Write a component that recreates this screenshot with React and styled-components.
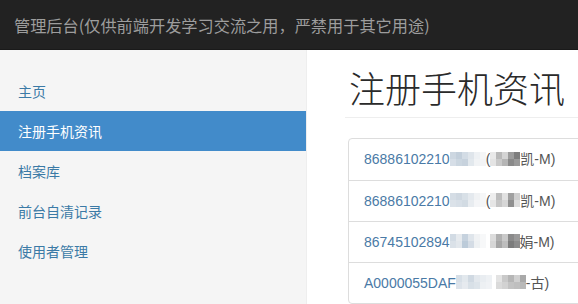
import React from "react";
import styled, { createGlobalStyle } from "styled-components";

const GlobalStyle = createGlobalStyle`
  html, body {
    margin: 0;
    padding: 0;
    overflow: hidden;
    background: #fff;
  }
  body {
    font-family: "Liberation Sans", "Noto Sans CJK SC", sans-serif;
    font-size: 14px;
    color: #333;
  }
  * { box-sizing: border-box; }
`;

const Page = styled.div`
  width: 578px;
  height: 304px;
  display: flex;
  flex-direction: column;
  overflow: hidden;
`;

const Navbar = styled.header`
  height: 50px;
  flex: none;
  background: #222;
  border-bottom: 1px solid #1a1a1a;
  display: flex;
  align-items: center;
  padding: 0 14px;
`;

const Brand = styled.span`
  font-family: "Noto Sans CJK SC", sans-serif;
  font-size: 16.2px;
  color: #9d9d9d;
  line-height: 20px;
`;

const Body = styled.div`
  flex: 1;
  display: flex;
  min-height: 0;
`;

const Sidebar = styled.nav`
  width: 307px;
  flex: none;
  background: #f5f5f5;
  border-right: 1px solid #eee;
  padding-top: 21px;
  display: flex;
  flex-direction: column;
`;

const NavItem = styled.a`
  display: block;
  padding: 10px 18px;
  line-height: 20px;
  font-family: "Noto Sans CJK SC", sans-serif;
  font-size: 14px;
  color: ${(p) => (p.$active ? "#fff" : "#3b7aa6")};
  background: ${(p) => (p.$active ? "#428bca" : "transparent")};
  text-decoration: none;
`;

const Main = styled.main`
  flex: 1;
  min-width: 0;
  padding: 18px 0 0 38px;
  overflow: hidden;
`;

const PageHeader = styled.h1`
  margin: 0 0 20px;
  padding: 0 0 9px 4px;
  border-bottom: 1px solid #eee;
  font-family: "Noto Sans CJK SC", sans-serif;
  font-size: 36px;
  font-weight: 300;
  line-height: 1.1;
  color: #2a2a2a;
  white-space: nowrap;
`;

const ListGroup = styled.div`
  margin: 0 -6px 0 3px;
  border: 1px solid #ddd;
  border-radius: 4px;
  background: #fff;
`;

const ListItem = styled.div`
  display: flex;
  align-items: center;
  height: 41px;
  padding: 0 15px;
  border-top: ${(p) => (p.$first ? "none" : "1px solid #ddd")};
  white-space: nowrap;
  font-size: 14px;
  line-height: 20px;
`;

const Code = styled.span`
  color: #4a7aa6;
`;

const Tail = styled.span`
  color: #555;
  font-family: "Liberation Sans", "Noto Sans CJK SC", sans-serif;
`;

const Mosaic = styled.span`
  display: inline-grid;
  grid-auto-flow: column;
  grid-template-rows: 7px 7px;
  grid-auto-columns: ${(p) => p.$cell}px;
  height: 14px;
  margin-top: -1px;
`;

const Cell = styled.span`
  background: ${(p) => p.$c};
`;

function Pixels({ cols, cell = 6 }) {
  return (
    <Mosaic $cell={cell}>
      {cols.flatMap((pair, i) => [
        <Cell key={i + "t"} $c={pair[0]} />,
        <Cell key={i + "b"} $c={pair[1]} />,
      ])}
    </Mosaic>
  );
}

const blueA = [
  ["#cdd7e1", "#d6dee7"],
  ["#c3cfdb", "#cbd6e0"],
  ["#d3dce5", "#c7d2dd"],
  ["#dfe5eb", "#e2e8ed"],
  ["#eef1f4", "#f1f3f5"],
  ["#f5f6f7", "#f3f4f6"],
];
const blueB = [
  ["#d5dde5", "#dbe2e9"],
  ["#cfd8e1", "#d7dfe7"],
  ["#d8e0e7", "#d2dbe3"],
  ["#e4e9ee", "#e8ecf0"],
  ["#f0f2f4", "#f4f5f7"],
  ["#f6f7f8", "#f5f6f7"],
];
const blueC = [
  ["#d2dbe4", "#dae1e8"],
  ["#e6eaee", "#e2e7ec"],
  ["#c6d2de", "#bccbd9"],
  ["#dfe5eb", "#d4dce5"],
  ["#f0f2f4", "#eef1f3"],
  ["#f7f8f9", "#f7f8f9"],
];
const blueD = [
  ["#d7dfe7", "#dde3ea"],
  ["#e2e8ed", "#e6eaef"],
  ["#d0d9e2", "#d8e0e7"],
  ["#e3e8ed", "#dde4ea"],
  ["#e9edf1", "#edf0f3"],
  ["#eef1f4", "#f0f2f5"],
];
const greyA = [
  ["#e9e9e9", "#e4e4e4"],
  ["#b9b9b9", "#c9c9c9"],
  ["#d4d4d4", "#b5b5b5"],
  ["#9c9c9c", "#8a8a8a"],
  ["#7d7d7d", "#9a9a9a"],
];
const greyB = [
  ["#eeeeee", "#e6e6e6"],
  ["#bdbdbd", "#c6c6c6"],
  ["#e1e1e1", "#d6d6d6"],
  ["#a0a0a0", "#8f8f8f"],
  ["#cfcfcf", "#dcdcdc"],
];
const greyC = [
  ["#dcdcdc", "#d6d6d6"],
  ["#b0b0b0", "#a6a6a6"],
  ["#c9c9c9", "#bdbdbd"],
  ["#8a8a8a", "#7c7c7c"],
  ["#9a9a9a", "#8c8c8c"],
];
const greyD = [
  ["#e3e3e3", "#dadada"],
  ["#c9c9c9", "#d2d2d2"],
  ["#b6b6b6", "#c3c3c3"],
  ["#d0d0d0", "#bfbfbf"],
  ["#a9a9a9", "#b8b8b8"],
];

const navItems = ["主页", "注册手机资讯", "档案库", "前台自清记录", "使用者管理"];

const rows = [
  { code: "86886102210", blue: blueA, paren: true, grey: greyA, tail: "凯-M)" },
  { code: "86886102210", blue: blueB, paren: true, grey: greyB, tail: "凯-M)" },
  { code: "86745102894", blue: blueC, paren: false, grey: greyC, tail: "娟-M)" },
  { code: "A0000055DAF", blue: blueD, paren: false, grey: greyD, tail: "-古)" },
];

export default function App() {
  return (
    <>
      <GlobalStyle />
      <Page>
        <Navbar>
          <Brand>管理后台(仅供前端开发学习交流之用，严禁用于其它用途)</Brand>
        </Navbar>
        <Body>
          <Sidebar>
            {navItems.map((t, i) => (
              <NavItem key={t} href="#" $active={i === 1}>
                {t}
              </NavItem>
            ))}
          </Sidebar>
          <Main>
            <PageHeader>注册手机资讯</PageHeader>
            <ListGroup>
              {rows.map((r, i) => (
                <ListItem key={i} $first={i === 0}>
                  <Code>{r.code}</Code>
                  <Pixels cols={r.blue} />
                  <Tail>{r.paren ? "(" : "\u00a0"}</Tail>
                  <Pixels cols={r.grey} />
                  <Tail>{r.tail}</Tail>
                </ListItem>
              ))}
            </ListGroup>
          </Main>
        </Body>
      </Page>
    </>
  );
}
